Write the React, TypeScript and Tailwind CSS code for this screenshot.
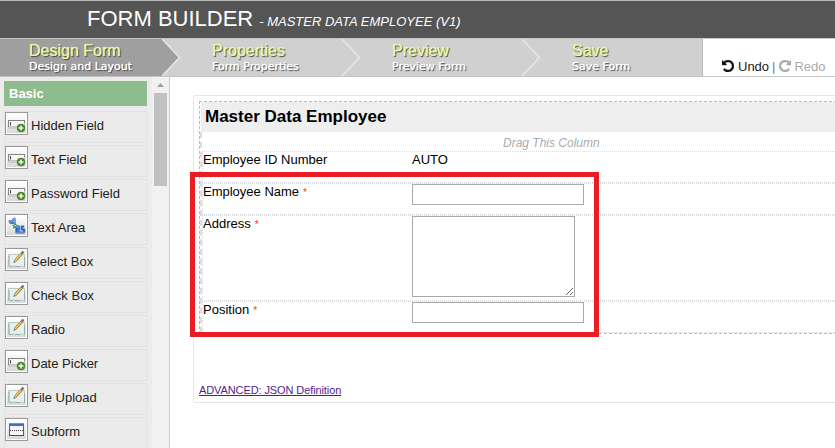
import React from "react";

type IconKind = "field" | "area" | "edit" | "subform";

const elements: { label: string; icon: IconKind }[] = [
  { label: "Hidden Field", icon: "field" },
  { label: "Text Field", icon: "field" },
  { label: "Password Field", icon: "field" },
  { label: "Text Area", icon: "area" },
  { label: "Select Box", icon: "edit" },
  { label: "Check Box", icon: "edit" },
  { label: "Radio", icon: "edit" },
  { label: "Date Picker", icon: "field" },
  { label: "File Upload", icon: "edit" },
  { label: "Subform", icon: "subform" },
];

function ElementIcon({ kind }: { kind: IconKind }) {
  return (
    <svg width="19" height="19" viewBox="0 0 19 19" className="block">
      {kind === "field" && (
        <g>
          <path d="M1 12v3h11v-3z" fill="#c6c6c6" opacity=".7" />
          <rect x="1.5" y="6.5" width="16" height="6" fill="#f6f6f6" stroke="#c4c4c4" />
          <path d="M1 6.5h17M1.5 6v7M17.5 6v3" stroke="#858585" />
          <path d="M3.500 8v3.500" stroke="#444" />
          <circle cx="14" cy="14" r="3.900" fill="#4c8c2b" stroke="#3b6f20" strokeWidth=".6" />
          <path d="M14 11.500v5M11.500 14h5" stroke="#e9ffd9" strokeWidth="1.600" />
        </g>
      )}
      {kind === "area" && (
        <g fill="none" strokeLinejoin="round">
          <path d="M2 4.500L4 6.500M2.500 7.500L7.500 2.500L8 9M4 7h4" stroke="#3f78c8" strokeWidth="2" />
          <path d="M3 7L7.500 2.500L8 8" stroke="#8db9ee" strokeWidth=".7" />
          <path d="M5.500 9l3.500 2.500M9.500 8.500l-.5 3H6" stroke="#45a04a" strokeWidth="1.400" />
          <path d="M9 10.500h3v6M12 13H9.500v3.500H17.500" stroke="#2864bd" strokeWidth="2.200" />
          <path d="M17.200 10.500h-2.500v3h2.500v3" stroke="#2864bd" strokeWidth="2" />
          <path d="M9 10.300h3v5.700M9.500 16.300h8" stroke="#72a7e9" strokeWidth=".8" />
        </g>
      )}
      {kind === "edit" && (
        <g>
          <path d="M1.500 4.500h16v12h-2l-1-1-1.500 1h-5l-1.500-1-1 1h-2l-.500-1-1 .500z" fill="#e6f1ef" stroke="#b5cac7" />
          <path d="M2 6v10.500M17.500 7v9.500M3 16.500h3M8 16.500h5" fill="none" stroke="#94aeab" />
          <path d="M8 11L14.500 4" stroke="#9b7130" strokeWidth="2.600" />
          <path d="M8 11L14.500 3.700" stroke="#f4cc62" strokeWidth="1.400" />
          <path d="M14.300 4L16.500 1.500" stroke="#8a6b54" strokeWidth="2.600" />
          <path d="M6.300 13l1-2.500 1.500 1.500z" fill="#666" />
        </g>
      )}
      {kind === "subform" && (
        <g>
          <rect x="2.500" y="3.500" width="14" height="12" fill="#f2f7fb" stroke="#3c609d" />
          <rect x="2" y="3" width="15" height="3" fill="#3d6fc5" />
          <path d="M2 3.500h15" stroke="#6d94d4" />
          <path d="M3 10.500h13" stroke="#444" strokeDasharray="1 1" />
          <path d="M2 15.500h15" stroke="#2f5187" />
        </g>
      )}
    </svg>
  );
}

function TurnArrow({ mirrored }: { mirrored?: boolean }) {
  return (
    <svg width="12" height="12" viewBox="0 0 1536 1536" fill="currentColor" stroke="currentColor" strokeWidth="50" className={`block shrink-0 ${mirrored ? "-scale-x-100" : ""}`}>
      <path d="M1536 768q0 156-61 298t-164 245-245 164-298 61q-172 0-327-72.5t-264-204.5q-7-10-6.5-22.5t8.5-20.5l137-138q10-9 25-9 16 2 23 12 73 95 179 147t225 52q104 0 198.5-40.5t163.5-109.5 109.5-163.5 40.5-198.5-40.5-198.5-109.5-163.5-163.5-109.5-198.5-40.5q-98 0-188 35.5t-160 101.5l137 138q31 30 14 69-17 40-59 40h-448q-26 0-45-19t-19-45v-448q0-42 40-59 39-17 69 14l130 129q107-101 244.5-156.5t284.5-55.5q156 0 298 61t245 164 164 245 61 298z" />
    </svg>
  );
}

const steps = [
  { title: "Design Form", sub: "Design and Layout" },
  { title: "Properties", sub: "Form Properties" },
  { title: "Preview", sub: "Preview Form" },
  { title: "Save", sub: "Save Form" },
];

function Step({ title, sub, index }: { title: string; sub: string; index: number }) {
  const active = index === 0;
  return (
    <div className={`flex h-[37px] ${active ? "w-[183px]" : index === 3 ? "w-[159px]" : "w-[180px]"}`}>
      <div className={`flex-1 pl-[29px] ${active ? "bg-[#9f9f9f]" : ""}`}>
        <div className="mt-[3px] h-[17px] whitespace-nowrap text-[16px] leading-[17px] text-[#e8f6a8] [text-shadow:0_0_1px_#e8f6a8,1px_1px_1px_#333]">
          {title}
        </div>
        <div className="h-[15px] whitespace-nowrap font-['DejaVu_Sans',Verdana,sans-serif] text-[11px] leading-[15px] text-white [text-shadow:0_0_1px_#fff,1px_1px_1px_#333]">
          {sub}
        </div>
      </div>
      {index < 3 && (
        <svg width="21" height="37" viewBox="0 0 21 37" className="block shrink-0">
          {active && <path d="M0 0L17.500 18.500L0 37z" fill="#9f9f9f" />}
          <path d="M0 0L17.500 18.500L0 37" fill="none" stroke="#e8e8e8" strokeWidth="1.400" />
        </svg>
      )}
    </div>
  );
}

function Row({ label, required, className, children }: {
  label: string;
  required?: boolean;
  className: string;
  children: React.ReactNode;
}) {
  return (
    <div className={`flex border border-dotted border-[#dcdcdc] ${className}`}>
      <div className="w-[209px] leading-[15px]">
        {label}
        {required && <span className="ml-1 text-[10px] text-[#ff3030]">*</span>}
      </div>
      {children}
    </div>
  );
}

export default function App() {
  return (
    <div className="relative flex h-[448px] w-[835px] flex-col overflow-hidden bg-white font-['Liberation_Sans',Arial,sans-serif] text-[13px] text-black">
      <header className="flex h-[38px] shrink-0 items-baseline border-t border-[#b9b9b9] bg-[#555] pl-[87px] whitespace-nowrap text-white">
        <span className="text-[22px] leading-[36px]">FORM BUILDER</span>
        <span className="ml-[6px] text-[13px] italic">- MASTER DATA EMPLOYEE (V1)</span>
      </header>
      <nav className="flex h-[39px] shrink-0 border-y border-[#c4c4c4]">
        <div className="flex w-[703px] shrink-0 border-r border-[#bbb] bg-[#d0d0d0]">
          {steps.map((s, i) => <Step key={s.title} index={i} title={s.title} sub={s.sub} />)}
        </div>
        <div className="flex h-[37px] items-end pb-[2px] pl-[19px] leading-[15px] text-[#222]">
          <span className="mb-[2px] text-[#111]"><TurnArrow /></span>
          <span className="ml-[4px]">Undo</span>
          <span className="ml-[3px] text-[#777]">|</span>
          <span className="mb-[2px] ml-[4px] text-[#aaa]"><TurnArrow mirrored /></span>
          <span className="ml-[3px] text-[#aaa]">Redo</span>
        </div>
      </nav>
      <div className="flex min-h-0 flex-1">
        <aside className="flex w-[170px] shrink-0 border-r border-[#ccc] bg-[#ebebeb]">
          <div className="w-[152px] pt-[4px] pl-[4px]">
            <div className="mb-[5px] h-[25px] w-[143px] bg-[#8fbc8f] pl-[5px] leading-[25px] font-bold text-white">Basic</div>
            <div className="flex flex-col gap-[2px]">
              {elements.map((e) => (
                <div key={e.label} className="flex h-[32px] w-[143px] shrink-0 items-start border border-dotted border-[#d9d9d9]">
                  <div className="h-[23px] w-[23px] border border-[#999] bg-white p-px">
                    <div className="h-[19px] w-[19px] bg-linear-to-b from-white to-[#d9d9d9]">
                      <ElementIcon kind={e.icon} />
                    </div>
                  </div>
                  <span className="mt-[6px] ml-[3px] leading-[15px] text-[#222]">{e.label}</span>
                </div>
              ))}
            </div>
          </div>
          <div className="flex w-[17px] flex-col items-center bg-[#f1f1f1]">
            <svg width="7" height="4" viewBox="0 0 7 4" className="mt-[6px] mb-[6px]">
              <path d="M0 4L3.500 0L7 4z" fill="#a0a0a0" />
            </svg>
            <div className="h-[93px] w-[13px] bg-[#c1c1c1]" />
          </div>
        </aside>
        <main className="flex-1 overflow-hidden pt-[18px] pl-[23px]">
          <div className="h-[308px] w-[700px] rounded-[2px] border border-[#e6e6e6] pt-[5px] pl-[5px]">
            <section className="h-[233px] border border-dashed border-[#bbb]">
              <h1 className="ml-px h-[30px] bg-[#eee] pl-[4px] text-[17px] leading-[29px] font-bold">Master Data Employee</h1>
              <div className="h-[201px] border-l-2 border-dashed border-[#ddd]">
                <div className="h-[19px] pt-[4px] pl-[301px] text-[12px] leading-[15px] text-[#aaa] italic">Drag This Column</div>
                <Row label="Employee ID Number" className="h-[32px]"><span className="leading-[15px]">AUTO</span></Row>
                <Row label="Employee Name" required className="h-[32px]">
                  <input aria-label="Employee Name" className="block h-[21px] w-[172px] border border-[#a9a9a9] bg-white" />
                </Row>
                <Row label="Address" required className="h-[86px]">
                  <textarea aria-label="Address" className="block h-[81px] w-[163px] resize border border-[#a9a9a9] bg-white" />
                </Row>
                <Row label="Position" required className="h-[32px]">
                  <input aria-label="Position" className="block h-[21px] w-[172px] border border-[#a9a9a9] bg-white" />
                </Row>
              </div>
            </section>
            <a href="#" className="mt-[49px] block w-fit text-[11px] leading-[14px] tracking-[-0.1px] text-[#551a8b] underline">ADVANCED: JSON Definition</a>
          </div>
        </main>
      </div>
      <div className="pointer-events-none absolute top-[172px] left-[190px] h-[165px] w-[409px] border-[5px] border-[#ed1c24]" />
    </div>
  );
}
